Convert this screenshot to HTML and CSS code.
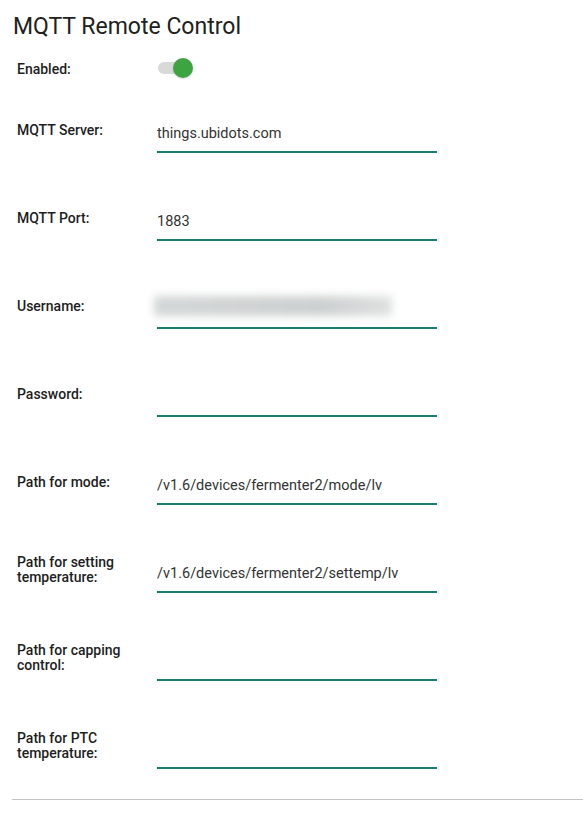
FILE: index.html
```html
<!DOCTYPE html>
<html>
<head>
<meta charset="utf-8">
<link rel="stylesheet" href="styles.css">
</head>
<body>
<div class="page">
  <h1 class="title">MQTT Remote Control</h1>
  <div class="row row-enabled">
    <div class="label">Enabled:</div>
    <div class="switch"><span class="track"></span><span class="knob"></span></div>
  </div>
  <div class="row">
    <div class="label">MQTT Server:</div>
    <div class="field"><span class="value">things.ubidots.com</span></div>
  </div>
  <div class="row">
    <div class="label">MQTT Port:</div>
    <div class="field"><span class="value">1883</span></div>
  </div>
  <div class="row">
    <div class="label">Username:</div>
    <div class="field"><span class="blurred"></span></div>
  </div>
  <div class="row">
    <div class="label">Password:</div>
    <div class="field"><span class="value"></span></div>
  </div>
  <div class="row">
    <div class="label">Path for mode:</div>
    <div class="field"><span class="value">/v1.6/devices/fermenter2/mode/lv</span></div>
  </div>
  <div class="row">
    <div class="label">Path for setting temperature:</div>
    <div class="field"><span class="value">/v1.6/devices/fermenter2/settemp/lv</span></div>
  </div>
  <div class="row">
    <div class="label">Path for capping control:</div>
    <div class="field"><span class="value"></span></div>
  </div>
  <div class="row">
    <div class="label">Path for PTC temperature:</div>
    <div class="field"><span class="value"></span></div>
  </div>
  <hr class="divider">
</div>
</body>
</html>
```
FILE: styles.css
```css
html, body {
  margin: 0;
  padding: 0;
  background: #ffffff;
}
body {
  font-family: Roboto, "Liberation Sans", sans-serif;
  color: #222222;
}
.page {
  padding: 14px 0 0 12px;
}
.title {
  margin: 0 0 0 1px;
  font-size: 23px;
  line-height: 26px;
  font-weight: 400;
  color: #212121;
}
.row {
  display: flex;
  align-items: center;
  height: 88px;
  padding-left: 5px;
}
.row-enabled {
  height: 30px;
  margin-top: 14px;
  margin-bottom: 2px;
}
.label {
  width: 140px;
  font-size: 14px;
  line-height: 15px;
  font-weight: 500;
  color: #1e1e1e;
  padding-right: 16px;
  box-sizing: border-box;
}
.switch {
  position: relative;
  width: 36px;
  height: 20px;
  margin-left: 1px;
  margin-top: -3px;
}
.track {
  position: absolute;
  left: 0;
  top: 4px;
  width: 34px;
  height: 12px;
  border-radius: 6px;
  background: #d9d9d9;
}
.knob {
  position: absolute;
  left: 15px;
  top: 0;
  width: 20px;
  height: 20px;
  border-radius: 50%;
  background: #3ea442;
  box-shadow: 0 1px 2px rgba(0,0,0,0.15);
}
.field {
  width: 280px;
  height: 46px;
  box-sizing: border-box;
  padding-top: 19px;
  border-bottom: 2px solid #1a806e;
}
.value {
  display: block;
  height: 16px;
  font-size: 14.5px;
  line-height: 16px;
  color: #333333;
}
.blurred {
  display: block;
  width: 238px;
  height: 20px;
  margin: -6px 0 0 -3px;
  background: linear-gradient(to right, #d4d7d7, #cdd0d0 70%, #dfe1e1);
  filter: blur(4px);
}
.divider {
  margin: 9px 0 0 0;
  border: 0;
  border-top: 1px solid #c4c4c4;
  height: 0;
}
```
